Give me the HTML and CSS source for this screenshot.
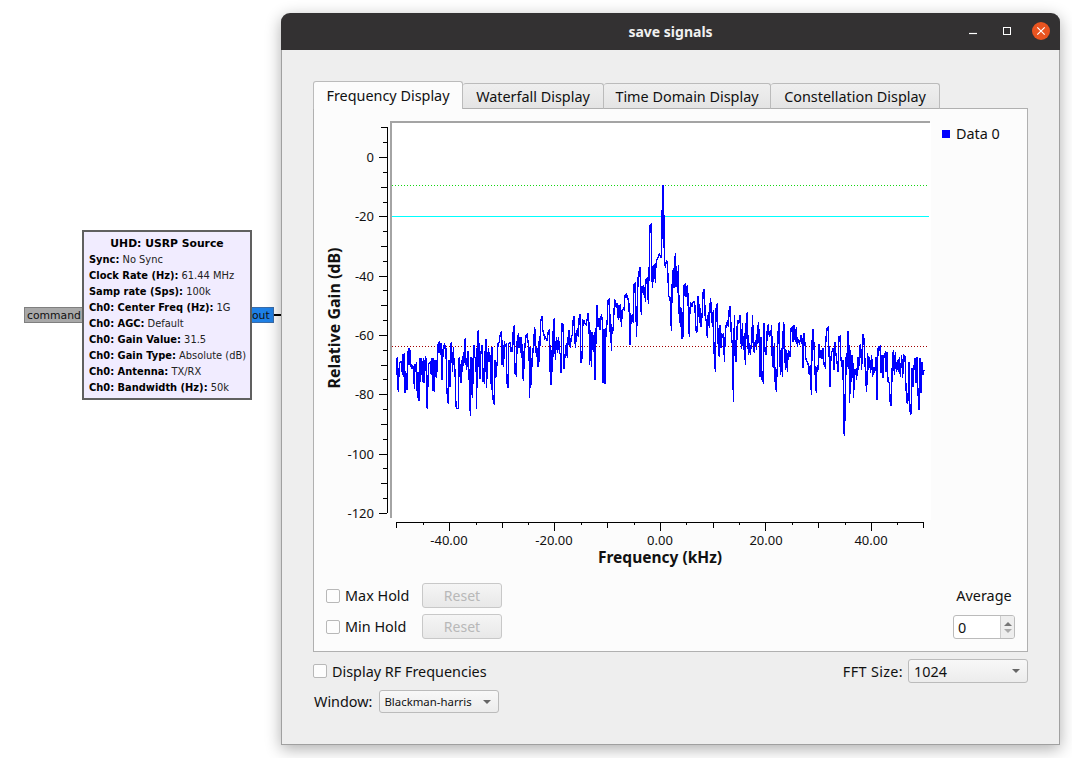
FILE: index.html
```html
<!DOCTYPE html>
<html lang="en">
<head>
<meta charset="utf-8">
<title>save signals</title>
<link rel="stylesheet" href="styles.css">
</head>
<body>
<div class="canvas">
  <div class="port port-in">command</div>
  <div class="block">
    <div class="block-title">UHD: USRP Source</div>
    <div><b>Sync:</b> No Sync</div>
    <div><b>Clock Rate (Hz):</b> 61.44 MHz</div>
    <div><b>Samp rate (Sps):</b> 100k</div>
    <div><b>Ch0: Center Freq (Hz):</b> 1G</div>
    <div><b>Ch0: AGC:</b> Default</div>
    <div><b>Ch0: Gain Value:</b> 31.5</div>
    <div><b>Ch0: Gain Type:</b> Absolute (dB)</div>
    <div><b>Ch0: Antenna:</b> TX/RX</div>
    <div><b>Ch0: Bandwidth (Hz):</b> 50k</div>
  </div>
  <div class="port port-out">out</div>
  <div class="wire"></div>

  <div class="window">
    <header class="titlebar">
      <span class="title">save signals</span>
      <div class="win-controls">
        <svg class="win-icon" viewBox="0 0 20 20" width="20" height="20"><path d="M6 12.5h8" stroke="#fff" stroke-width="1.2" fill="none"/></svg>
        <svg class="win-icon" viewBox="0 0 20 20" width="20" height="20"><rect x="6.5" y="6.5" width="7" height="7" stroke="#fff" stroke-width="1" fill="none"/></svg>
        <svg class="win-icon" viewBox="0 0 20 20" width="20" height="20"><circle cx="10" cy="10" r="9" fill="#e95420"/><path d="M6.3 6.3l7.4 7.4M13.7 6.3l-7.4 7.4" stroke="#fff" stroke-width="1.2" fill="none"/></svg>
      </div>
    </header>
    <main class="content">
      <nav class="tabs">
        <div class="tab tab-active">Frequency Display</div>
        <div class="tab tab-w2">Waterfall Display</div>
        <div class="tab tab-w3">Time Domain Display</div>
        <div class="tab tab-w4">Constellation Display</div>
      </nav>
      <section class="pane">
        <svg class="chart" viewBox="314 109 713 463" width="713" height="463">
          <rect x="392" y="123" width="539" height="397" fill="#fff"/>
          <path class="frame" d="M391 121V518M390 122H930"/>
          <path class="axis" d="M387.5 127V513M379 157H387M379 216H387M379 276H387M379 335H387M379 394H387M379 454H387M379 513H387M381 127H387M381 187H387M381 246H387M381 305H387M381 365H387M381 424H387M381 483H387M383 142H387M383 172H387M383 202H387M383 231H387M383 261H387M383 290H387M383 320H387M383 350H387M383 379H387M383 409H387M383 439H387M383 468H387M383 498H387"/>
          <path class="axis" d="M396 522.5H924M396.5 522V528M449.5 522V531M502 522V528M554.5 522V531M607.5 522V528M660.5 522V531M713 522V528M765.5 522V531M818 522V528M871 522V531M923.5 522V528M423 522V525M476 522V525M528.5 522V525M581 522V525M634 522V525M686.5 522V525M739 522V525M792 522V525M845 522V525M897.5 522V525"/>
          <rect class="mark-cyan" x="392" y="216" width="537" height="1"/>
          <line class="mark-green" x1="392" y1="185.5" x2="928" y2="185.5"/>
          <line class="mark-red" x1="392" y1="346.5" x2="928" y2="346.5"/>
          <g transform="translate(380 180) scale(.33333)">
            <polyline class="trace" points="48,538 51,535 52,630 54,575 55,635 58,552 61,547 65,544 67,584 69,523 71,590 73,520 75,640 77,572 79,600 81,630 83,550 85,503 87,556 89,503 91,530 93,558 95,568 98,558 101,562 103,628 105,552 108,575 110,545 112,655 114,575 116,660 118,660 120,533 122,605 124,533 126,548 128,605 130,533 132,610 134,575 136,530 138,535 140,680 142,686 144,600 146,550 150,546 154,585 156,534 159,632 161,533 163,636 165,540 168,590 170,594 172,525 175,487 177,520 179,483 181,525 183,490 185,595 187,600 189,510 191,500 194,490 196,510 198,508 200,615 203,665 205,668 207,540 210,620 212,492 214,490 216,540 218,577 220,500 222,542 224,555 226,600 228,680 232,686 235,686 236,535 239,533 241,608 244,608 246,540 248,575 250,515 252,550 254,480 256,478 258,550 260,570 263,515 265,515 268,614 271,708 273,530 276,640 278,655 280,500 282,495 284,530 288,535 290,688 292,455 296,452 298,590 300,598 302,525 304,510 306,495 309,605 312,565 314,612 316,482 318,478 320,625 322,515 324,545 326,505 328,545 330,525 332,548 334,630 336,500 338,635 340,668 343,672 345,540 347,595 350,565 352,540 354,490 358,485 361,460 364,457 366,555 368,480 371,560 373,482 376,500 379,490 381,610 384,625 386,490 390,488 393,515 395,500 398,515 400,440 403,438 405,580 408,585 410,540 412,470 415,465 417,505 420,470 422,520 425,470 428,595 431,600 433,490 436,505 438,465 442,462 444,485 447,505 449,653 452,500 454,615 456,545 458,505 461,520 463,445 466,450 468,515 470,530 472,505 474,560 476,482 478,545 482,425 486,408 488,450 491,460 494,475 497,470 499,480 502,480 505,452 509,450 511,610 514,616 516,510 518,575 520,420 523,418 526,540 528,500 530,470 533,520 536,470 538,520 541,520 543,580 545,430 549,432 552,566 556,515 559,490 562,535 565,460 568,450 571,505 574,470 577,465 580,412 583,410 586,505 589,470 592,445 595,472 598,404 601,405 603,550 606,535 609,420 612,422 615,430 618,435 621,420 624,398 627,430 629,555 631,450 634,560 636,455 638,490 640,515 643,455 645,600 647,515 650,378 652,378 654,440 657,415 660,450 662,410 665,405 667,425 669,610 672,448 675,612 678,448 681,432 684,362 687,358 690,455 692,402 694,512 696,450 699,450 701,415 704,358 707,365 709,385 712,370 715,420 717,375 719,415 722,372 724,440 727,395 730,385 733,392 735,345 738,342 740,355 742,345 745,362 747,372 750,495 752,400 755,432 757,402 760,430 762,312 765,310 767,375 770,470 773,290 775,320 778,265 780,262"/>
          </g>
          <g transform="translate(640 180) scale(.33333)">
            <polyline class="trace" points="0,262 2,360 4,405 6,320 10,318 12,345 14,320 16,365 18,298 22,295 25,372 28,240 30,135 34,132 36,298 38,325 40,258 44,255 46,310 48,250 52,235 56,232 58,220 62,232 65,230 67,52 69,15 71,52 73,250 76,258 80,240 83,265 86,350 90,352 92,390 94,452 97,290 100,265 102,325 104,262 106,220 108,320 110,258 113,340 115,256 118,430 120,380 122,440 124,385 126,478 128,395 130,470 132,315 136,312 138,350 140,320 143,318 146,435 148,470 150,385 153,370 156,378 160,365 164,365 168,450 171,457 174,350 176,350 178,430 180,385 183,440 186,410 190,328 193,328 196,420 199,420 202,475 205,395 208,445 211,355 214,375 217,440 220,390 222,515 226,575 228,385 232,370 235,515 238,530 240,435 243,505 245,460 248,475 251,460 253,545 256,460 259,430 262,425 265,440 268,382 271,380 274,470 278,500 280,665 283,405 286,545 289,545 292,420 296,432 300,405 302,475 305,508 307,430 310,510 313,460 316,555 319,405 322,400 325,525 328,490 331,525 335,480 338,405 340,510 343,515 346,480 350,510 352,450 356,425 360,590 363,470 366,600 369,605 372,430 375,515 378,525 380,500 382,438 385,435 388,470 392,465 395,435 397,555 400,560 403,490 406,625 409,630 412,555 415,435 418,430 421,585 424,505 427,590 430,430 433,435 436,570 439,510 442,575 445,510 450,530 453,445 456,442 459,485 462,435 466,485 469,440 472,500 475,480 479,490 483,465 486,475 489,565 492,460 495,490 498,540 502,545 505,555 508,585 511,555 514,645 517,450 520,450 523,520 526,595 529,640 531,560 534,570 537,492 540,535 543,510 546,538 549,505 552,555 555,560 558,475 561,445 564,442 567,510 570,620 573,530 576,515 579,505 582,570 585,485 588,525 591,545 594,575 597,470 600,468 603,540 606,560 609,540 611,760 614,765 617,530 620,585 623,456 626,455 629,670 632,510 635,605 638,525 641,655 643,568 647,570 650,600 653,530 656,570 659,498 662,495 665,570 668,465 671,465 674,520 677,600 680,635 683,520 686,570 689,530 692,580 695,525 698,590 701,560 704,580 708,530 711,660 714,505 717,500 720,498 723,580 726,525 729,595 732,525 735,520 738,575 741,515 744,605 748,610 751,675 754,675 757,545 760,510 763,585 766,515 769,575 772,540 775,575 778,530 781,590 785,525 788,595 791,525 795,530 798,625 801,670 804,660 807,545 810,695 813,703 816,565 819,620 822,560 825,535 828,610 831,530 834,640 837,690 840,535 843,640 846,545 849,585 852,570"/>
          </g>
          <g class="ylabels">
            <text x="374" y="162">0</text>
            <text x="374" y="221">-20</text>
            <text x="374" y="281">-40</text>
            <text x="374" y="340">-60</text>
            <text x="374" y="399">-80</text>
            <text x="374" y="459">-100</text>
            <text x="374" y="518">-120</text>
          </g>
          <g class="xlabels">
            <text x="449" y="545">-40.00</text>
            <text x="554" y="545">-20.00</text>
            <text x="660" y="545">0.00</text>
            <text x="766" y="545">20.00</text>
            <text x="871" y="545">40.00</text>
          </g>
          <text class="axis-title" x="660" y="563">Frequency (kHz)</text>
          <text class="axis-title axis-title-y" transform="translate(340 318) rotate(-90)">Relative Gain (dB)</text>
          <rect x="942" y="130" width="8" height="8" fill="#0000ff"/>
          <text class="legend" x="956" y="139">Data 0</text>
        </svg>
        <div class="controls">
          <div class="holds">
            <div class="hold-row">
              <label class="check"><span class="box"></span>Max Hold</label>
              <button class="reset" disabled>Reset</button>
            </div>
            <div class="hold-row">
              <label class="check"><span class="box"></span>Min Hold</label>
              <button class="reset" disabled>Reset</button>
            </div>
          </div>
          <div class="average">
            <span>Average</span>
            <div class="spin">
              <span class="spin-value">0</span>
              <span class="spin-arrows"><i class="up"></i><i class="down"></i></span>
            </div>
          </div>
        </div>
      </section>
      <div class="row-rf">
        <label class="check"><span class="box"></span>Display RF Frequencies</label>
        <div class="fft">
          <span class="fft-label">FFT Size:</span>
          <div class="combo combo-fft"><span>1024</span><i class="caret"></i></div>
        </div>
      </div>
      <div class="row-window">
        <span>Window:</span>
        <div class="combo combo-window"><span>Blackman-harris</span><i class="caret"></i></div>
      </div>
    </main>
  </div>
</div>
</body>
</html>
```
FILE: styles.css
```css
* { box-sizing: border-box; }
html, body { margin: 0; height: 100%; background: #fff; overflow: hidden; }
.canvas { position: relative; width: 1072px; height: 758px; font-family: "Noto Sans", sans-serif; color: #111; }

/* flowgraph block */
.block {
  position: absolute; left: 82px; top: 230px; width: 170px; height: 170px;
  border: 2px solid #606060; background: #f1ecff; padding: 3px 0 0 5px;
  font: 9.9px/16px "DejaVu Sans", sans-serif; color: #222; white-space: nowrap;
}
.block b { color: #000; }
.block-title { text-align: center; font-weight: 700; font-size: 10.8px; line-height: 17px; color: #000; padding-right: 5px; }
.port {
  position: absolute; top: 307px; height: 16px;
  font: 10.8px/15px "DejaVu Sans", sans-serif; color: #111; border: 1px solid;
}
.port-in { left: 24px; width: 58px; background: #a8a8a8; border-color: #7f7f7f; padding-left: 2px; border-width: 1px 0 1px 1px; }
.port-out { left: 252px; width: 22px; background: #1e80e6; border-color: #3a6ca8; padding-left: 0; border-width: 1px 1px 1px 0; }
.wire { position: absolute; left: 274px; top: 314px; width: 8px; height: 2px; background: #000; }

/* window */
.window {
  position: absolute; left: 281px; top: 13px; width: 779px; height: 732px;
  background: #eee; border: 1px solid #a0a0a0; border-top: 0;
  border-radius: 9px 9px 0 0;
  box-shadow: 0 4px 16px rgba(0,0,0,.32);
}
.titlebar {
  position: relative; height: 37px; margin: 0 -1px; background: #333132; border-radius: 9px 9px 0 0;
  display: flex; align-items: center; justify-content: center;
}
.title { color: #f0f0f0; font-weight: 700; font-size: 14px; }
.win-controls { position: absolute; right: 9px; top: 8px; display: flex; gap: 14px; }
.win-icon { display: block; }

.content { padding: 31px 31px 0 31px; font-size: 14.4px; }
.tabs { display: flex; align-items: flex-end; height: 28px; margin-bottom: -1px; position: relative; }
.tab {
  height: 26px; border: 1px solid #bbb; border-bottom: 1px solid #b0b0b0; border-left-width: 0;
  border-radius: 3px 3px 0 0; background: linear-gradient(#efefef, #e4e4e4);
  text-align: center; line-height: 25px; white-space: nowrap;
}
.tab-active {
  height: 28px; width: 150px; background: #fcfcfc; border-left-width: 1px; border-bottom: 0;
  line-height: 28px; position: relative; z-index: 1;
}
.tab-w2 { width: 141px; }
.tab-w3 { width: 167px; }
.tab-w4 { width: 169px; }

.pane { width: 715px; height: 544px; border: 1px solid #b0b0b0; background: #fcfcfc; }
.chart { display: block; }
.frame { fill: none; stroke: #a4a4a4; stroke-width: 2; shape-rendering: crispEdges; }
.axis { fill: none; stroke: #000; stroke-width: 1; shape-rendering: crispEdges; }
.mark-green { stroke: #12d812; stroke-width: 1; stroke-dasharray: 1 2; shape-rendering: crispEdges; }
.mark-cyan { fill: #00ffff; }
.mark-red { stroke: #a00000; stroke-width: 1; stroke-dasharray: 1 2; shape-rendering: crispEdges; }
.trace { fill: none; stroke: #0000ff; stroke-width: 4; stroke-linejoin: miter; shape-rendering: crispEdges; }
.chart text { font-family: "Noto Sans", sans-serif; fill: #111; }
.ylabels text { font-size: 13px; text-anchor: end; }
.xlabels text { font-size: 13px; text-anchor: middle; }
.axis-title { font-size: 15.5px; font-weight: 700; text-anchor: middle; }
.axis-title-y { font-size: 16px; }
.legend { font-size: 14.4px; }

.controls { display: flex; justify-content: space-between; padding: 11px 12px 0 12px; }
.holds { display: flex; flex-direction: column; gap: 6px; }
.hold-row { display: grid; grid-template-columns: 96px 80px; height: 25px; align-items: center; }
.check { display: flex; align-items: center; gap: 5px; white-space: nowrap; }
.box { width: 14px; height: 14px; border: 1px solid #b8b8b8; border-radius: 2px; background: #fdfdfd; }
.reset {
  height: 25px; width: 80px; padding: 0; font: 14px "Noto Sans", sans-serif; color: #b8b8b8;
  border: 1px solid #c8c8c8; border-radius: 3px; background: linear-gradient(#f5f5f5, #e8e8e8);
}
.average { display: flex; flex-direction: column; align-items: center; gap: 10px; padding-top: 3px; width: 62px; }
.spin {
  width: 62px; height: 24px; border: 1px solid #bbb; border-radius: 3px; background: #fff;
  display: flex; justify-content: space-between; align-items: center; padding-left: 4px;
}
.spin-arrows { width: 14px; height: 22px; border-left: 1px solid #ccc; background: #eee; display: flex; flex-direction: column; align-items: center; justify-content: center; gap: 3px; border-radius: 0 2px 2px 0; }
.up { border: 4px solid transparent; border-top: 0; border-bottom: 4px solid #777; }
.down { border: 4px solid transparent; border-bottom: 0; border-top: 4px solid #aaa; }

.row-rf { display: flex; justify-content: space-between; align-items: center; width: 715px; height: 24px; margin-top: 7px; }
.fft { display: flex; align-items: center; gap: 5px; }
.fft-label { letter-spacing: .35px; }
.combo {
  display: flex; align-items: center; justify-content: space-between; height: 24px;
  border: 1px solid #bbb; border-radius: 3px; background: linear-gradient(#f8f8f8, #ececec); padding: 0 7px 0 5px;
}
.combo-fft { width: 120px; }
.combo-window { width: 120px; height: 23px; font-size: 11.4px; padding-left: 4px; }
.caret { border: 4px solid transparent; border-bottom: 0; border-top: 4px solid #666; width: 0; height: 0; }
.row-window { display: flex; align-items: center; gap: 7px; margin-top: 7px; height: 23px; padding-left: 1px; }
```
